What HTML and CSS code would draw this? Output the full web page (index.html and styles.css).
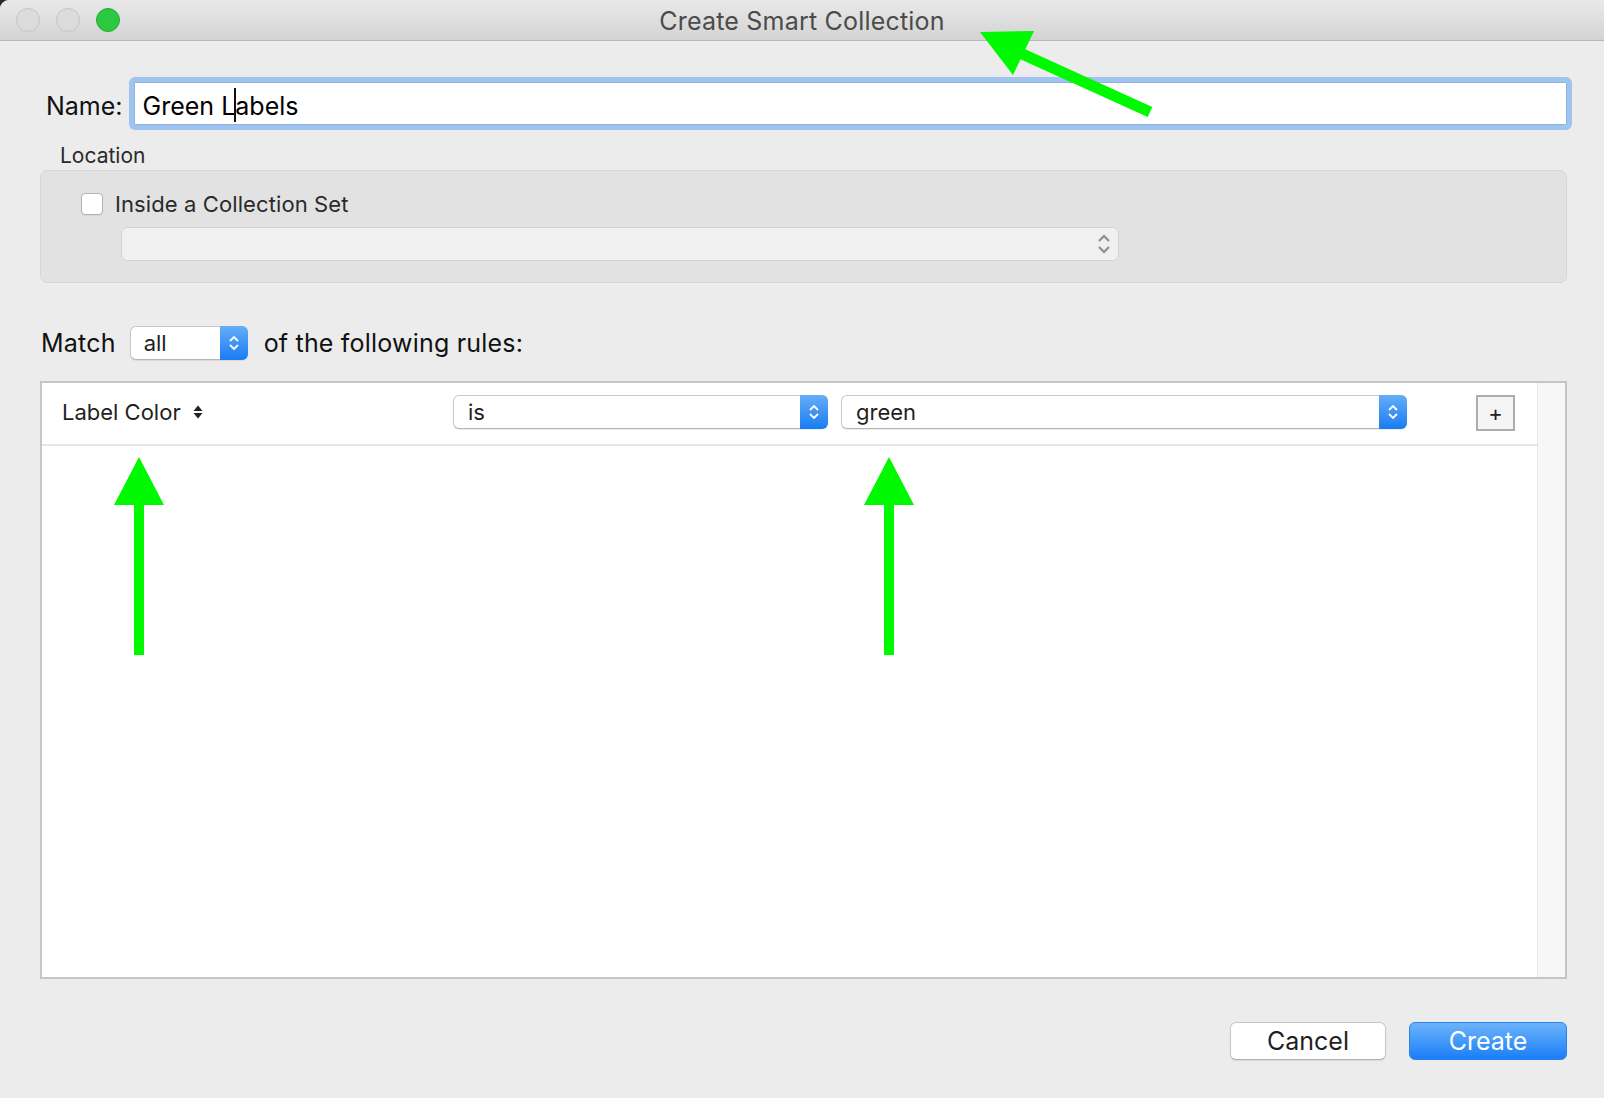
FILE: index.html
```html
<!DOCTYPE html>
<html lang="en">
<head>
<meta charset="utf-8">
<title>Create Smart Collection</title>
<link rel="stylesheet" href="styles.css">
</head>
<body>
<div class="window">
  <div class="titlebar">
    <div class="lights">
      <span class="light gray"></span>
      <span class="light gray"></span>
      <span class="light green"></span>
    </div>
    <div class="title">Create Smart Collection</div>
    <div class="spacer"></div>
  </div>

  <div class="content">
    <div class="name-row">
      <span class="name-label">Name:</span>
      <div class="name-field"><span>Green L</span><span class="caret"></span><span>abels</span></div>
    </div>

    <div class="location-label">Location</div>
    <div class="location-box">
      <div class="check-row">
        <span class="checkbox"></span>
        <span class="check-text">Inside a Collection Set</span>
      </div>
      <div class="loc-popup">
        <svg class="loc-arrows" width="16" height="24" viewBox="0 0 16 24"><path d="M3 9 L8 4 L13 9 M3 15 L8 20 L13 15" fill="none" stroke="#8e8e8e" stroke-width="2.2"/></svg>
      </div>
    </div>

    <div class="match-row">
      <span class="match-text">Match</span>
      <div class="popup popup-all">
        <span class="popup-text">all</span>
        <span class="popup-btn"><svg width="14" height="24" viewBox="0 0 14 24"><path d="M3 10 L7 6 L11 10 M3 14 L7 18 L11 14" fill="none" stroke="#fff" stroke-width="1.8"/></svg></span>
      </div>
      <span class="match-text">of the following rules:</span>
    </div>

    <div class="rules-box">
      <div class="rules-list">
        <div class="rule-row">
          <div class="rule-field">
            <span>Label Color</span>
            <svg width="10" height="18" viewBox="0 0 10 18"><polygon points="0.5,8 5,2.5 9.5,8" fill="#222"/><polygon points="0.5,10 5,15.5 9.5,10" fill="#222"/></svg>
          </div>
          <div class="popup popup-is">
            <span class="popup-text">is</span>
            <span class="popup-btn"><svg width="14" height="24" viewBox="0 0 14 24"><path d="M3 10 L7 6 L11 10 M3 14 L7 18 L11 14" fill="none" stroke="#fff" stroke-width="1.8"/></svg></span>
          </div>
          <div class="popup popup-green">
            <span class="popup-text">green</span>
            <span class="popup-btn"><svg width="14" height="24" viewBox="0 0 14 24"><path d="M3 10 L7 6 L11 10 M3 14 L7 18 L11 14" fill="none" stroke="#fff" stroke-width="1.8"/></svg></span>
          </div>
          <button class="plus">+</button>
        </div>
      </div>
      <div class="scroll-track"></div>
    </div>

    <div class="buttons">
      <button class="btn btn-cancel">Cancel</button>
      <button class="btn btn-create">Create</button>
    </div>
  </div>

  <svg class="annotations" width="1604" height="1098" viewBox="0 0 1604 1098">
    <polygon points="980,32 1034,31 1013,75" fill="#00f800"/>
    <line x1="1018" y1="52" x2="1150" y2="112" stroke="#00f800" stroke-width="11"/>
    <polygon points="114,505 139,457 164,505" fill="#00f800"/>
    <rect x="134" y="504" width="10" height="151" fill="#00f800"/>
    <polygon points="864,505 889,457 914,505" fill="#00f800"/>
    <rect x="884" y="504" width="10" height="151" fill="#00f800"/>
  </svg>
</div>
</body>
</html>
```

FILE: styles.css
```css
html {
  background: #2a2a2a;
}
body {
  margin: 0;
  font-family: "Inter", "Noto Sans", "Liberation Sans", sans-serif;
  color: #1f1f1f;
}
.window {
  position: relative;
  width: 1604px;
  height: 1098px;
  background: #ececec;
  overflow: hidden;
  border-top-left-radius: 9px;
  display: flex;
  flex-direction: column;
}

/* Title bar */
.titlebar {
  height: 40px;
  flex: none;
  display: grid;
  grid-template-columns: 1fr auto 1fr;
  align-items: center;
  background: linear-gradient(#e9e9e9, #d3d3d3);
  border-bottom: 1px solid #b7b7b7;
}
.lights {
  display: flex;
  gap: 16px;
  padding-left: 16px;
}
.light {
  width: 22px;
  height: 22px;
  border-radius: 50%;
  border: 1px solid #c4c4c4;
  background: #dcdcdc;
}
.light.green {
  background: #2cc840;
  border-color: #22ad33;
}
.title {
  font-size: 25px;
  color: #4b4b4b;
  letter-spacing: 0.2px;
  padding-top: 2px;
}

/* Content */
.content {
  padding: 0 37px 0 40px;
  display: flex;
  flex-direction: column;
}
.name-row {
  margin-top: 36px;
  display: flex;
  align-items: center;
  gap: 6px;
  margin-right: -5px;
}
.name-label {
  padding-left: 6px;
  padding-top: 4px;
  font-size: 25px;
  color: #111;
}
.name-field {
  flex: 1;
  border: 5px solid #9fc4f0;
  border-radius: 6px;
  background: #fff;
  box-shadow: inset 0 0 0 1px #8fb2dc;
  display: flex;
  align-items: center;
  padding: 5px 0 0 9px;
  box-sizing: content-box;
  height: 38px;
  font-size: 25px;
  color: #000;
}
.caret {
  display: inline-block;
  width: 2px;
  height: 34px;
  background: #111;
  margin: -3px -1px 0;
}

.location-label {
  margin-top: 13px;
  padding-left: 20px;
  font-size: 21px;
  line-height: 26px;
  color: #2a2a2a;
}
.location-box {
  margin-top: 1px;
  border: 1px solid #d7d7d7;
  border-radius: 7px;
  background: #e2e2e2;
  padding: 21px 0 0 40px;
  box-sizing: border-box;
  height: 113px;
}
.check-row {
  display: flex;
  align-items: center;
  gap: 12px;
  height: 23px;
}
.checkbox {
  width: 20px;
  height: 20px;
  border: 1px solid #b3b3b3;
  border-radius: 4px;
  background: #fff;
  box-shadow: 0 1px 1px rgba(0,0,0,0.06);
}
.check-text {
  font-size: 22px;
  color: #2a2a2a;
  letter-spacing: 0.1px;
}
.loc-popup {
  margin: 12px 0 0 40px;
  width: 990px;
  height: 32px;
  border: 1px solid #d4d4d4;
  border-radius: 6px;
  background: #f0f0f0;
  display: flex;
  align-items: center;
  justify-content: flex-end;
  padding-right: 6px;
  box-sizing: content-box;
}

/* Match row */
.match-row {
  margin-top: 43px;
  display: flex;
  align-items: center;
  height: 33px;
  padding-left: 1px;
}
.match-text {
  font-size: 25px;
  color: #111;
  letter-spacing: 0.2px;
}
.popup {
  display: flex;
  align-items: stretch;
  height: 32px;
  background: #fff;
  border: 1px solid #c9c9c9;
  border-bottom-color: #b5b5b5;
  border-radius: 6px;
  box-shadow: 0 1px 1px rgba(0,0,0,0.08);
  box-sizing: content-box;
}
.popup-text {
  flex: 1;
  display: flex;
  align-items: center;
  padding-left: 14px;
  font-size: 22px;
  color: #1f1f1f;
}
.popup-btn {
  width: 28px;
  margin: -1px -1px -1px 0;
  border-radius: 0 6px 6px 0;
  background: linear-gradient(#65adf9, #1a7cf2);
  display: flex;
  align-items: center;
  justify-content: center;
}
.popup-all {
  width: 116px;
  margin: 0 16px 0 14px;
}
.popup-all .popup-text {
  padding-left: 13px;
}

/* Rules box */
.rules-box {
  margin-top: 22px;
  height: 594px;
  border: 2px solid #c6c6c6;
  background: #fff;
  display: flex;
}
.rules-list {
  flex: 1;
}
.rule-row {
  box-sizing: border-box;
  height: 63px;
  border-bottom: 2px solid #e6e6e6;
  display: flex;
  align-items: flex-start;
  padding: 12px 22px 0 20px;
}
.rule-field {
  width: 391px;
  height: 34px;
  display: flex;
  align-items: center;
  gap: 12px;
  font-size: 22px;
  color: #1f1f1f;
}
.popup-is {
  width: 373px;
}
.popup-green {
  width: 564px;
  margin-left: 13px;
}
.plus {
  margin-left: auto;
  width: 39px;
  height: 36px;
  border: 2px solid #adadad;
  background: #f5f5f5;
  font-family: "Inter", "Liberation Sans", sans-serif;
  font-size: 22px;
  color: #222;
  padding: 0;
  line-height: 1;
}
.scroll-track {
  width: 27px;
  background: #f7f7f7;
  border-left: 1px solid #e8e8e8;
}

/* Buttons */
.buttons {
  margin-top: 43px;
  display: flex;
  justify-content: flex-end;
  gap: 23px;
}
.btn {
  height: 38px;
  border-radius: 6px;
  font-family: "Inter", "Liberation Sans", sans-serif;
  font-size: 25px;
  padding: 0;
}
.btn-cancel {
  width: 156px;
  background: #fff;
  border: 1px solid #c6c6c6;
  border-bottom-color: #b0b0b0;
  color: #1f1f1f;
  box-shadow: 0 1px 1px rgba(0,0,0,0.08);
}
.btn-create {
  width: 158px;
  border: 1px solid #2a80ec;
  background: linear-gradient(#6cb3fb, #1a7ef8);
  color: #fff;
}

/* Annotation arrows */
.annotations {
  position: absolute;
  left: 0;
  top: 0;
  pointer-events: none;
}
```
